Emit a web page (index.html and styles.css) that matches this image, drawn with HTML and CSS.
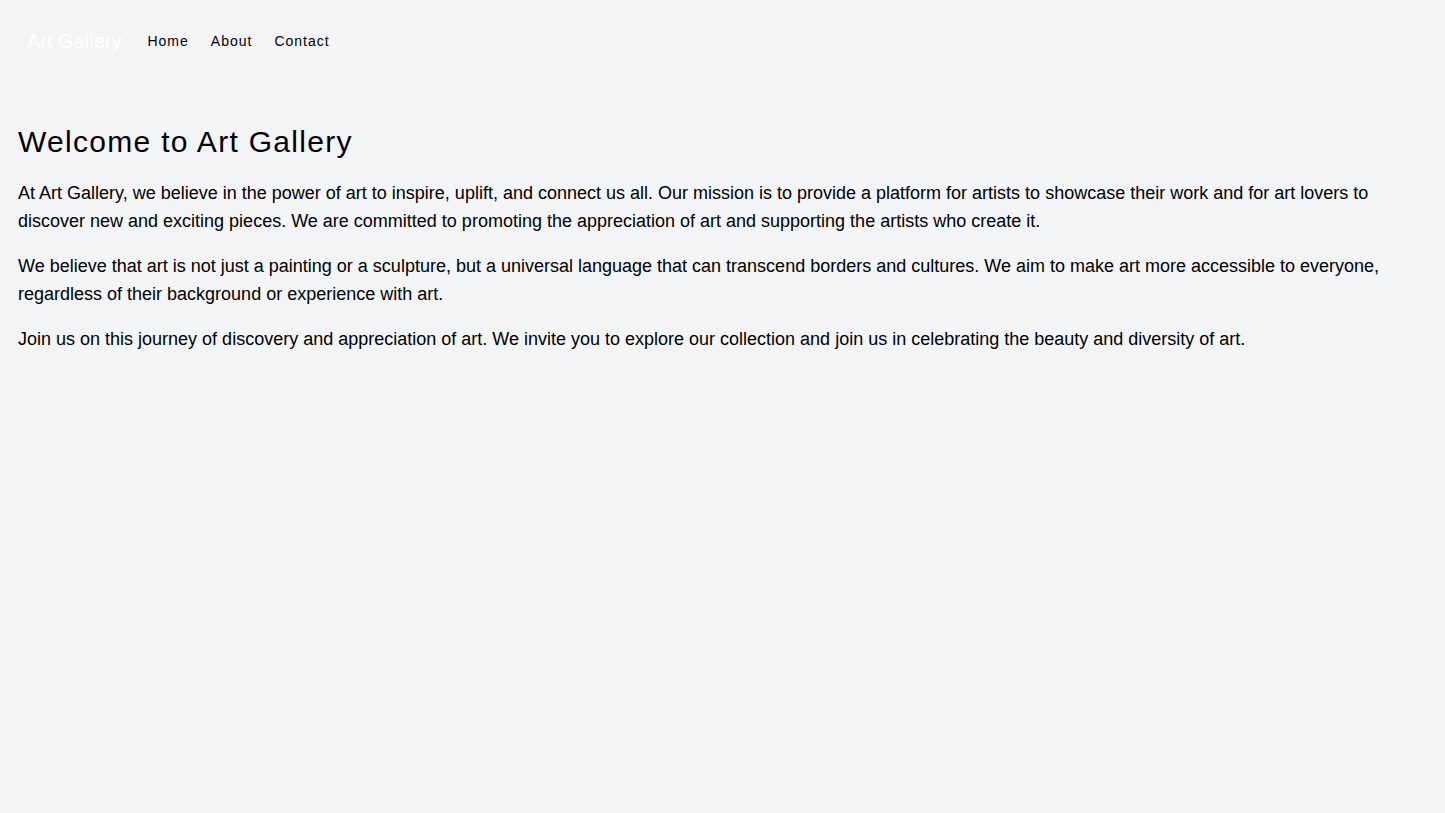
FILE: index.html
```html
<!DOCTYPE html>
<html lang="en">
<head>
  <meta charset="UTF-8">
  <meta name="viewport" content="width=device-width, initial-scale=1.0">
  <title>Art Gallery</title>
  <link rel="stylesheet" href="styles.css">
</head>
<body>
  <nav class="nav">
    <a href="#" class="brand">Art Gallery</a>
    <div class="nav-links">
      <a href="#">Home</a>
      <a href="#">About</a>
      <a href="#">Contact</a>
    </div>
  </nav>

  <main class="content">
    <h1>Welcome to Art Gallery</h1>
    <p>At Art Gallery, we believe in the power of art to inspire, uplift, and connect us all. Our mission is to provide a platform for artists to showcase their work and for art lovers to discover new and exciting pieces. We are committed to promoting the appreciation of art and supporting the artists who create it.</p>
    <p>We believe that art is not just a painting or a sculpture, but a universal language that can transcend borders and cultures. We aim to make art more accessible to everyone, regardless of their background or experience with art.</p>
    <p>Join us on this journey of discovery and appreciation of art. We invite you to explore our collection and join us in celebrating the beauty and diversity of art.</p>
  </main>
</body>
</html>
```

FILE: styles.css
```css
html, body {
  height: 100%;
}
body {
  font-family: "Liberation Sans", Arial, sans-serif;
  margin: 0;
  padding: 0;
  background-color: #f3f4f6;
  color: #000;
}
a {
  color: inherit;
  text-decoration: none;
}
.nav {
  display: flex;
  align-items: center;
  padding: 27px 27px;
}
.brand {
  font-size: 20px;
  line-height: 28px;
  color: #fff;
  margin-right: 26px;
}
.nav-links {
  display: flex;
  gap: 22px;
  font-size: 14px;
  line-height: 20px;
  letter-spacing: 1px;
}
.content {
  padding: 42px 18px;
}
h1 {
  font-size: 30px;
  line-height: 36px;
  font-weight: normal;
  letter-spacing: 1.3px;
  margin: 0 0 19px;
}
p {
  font-size: 18px;
  line-height: 28px;
  margin: 0 0 17px;
}
```
